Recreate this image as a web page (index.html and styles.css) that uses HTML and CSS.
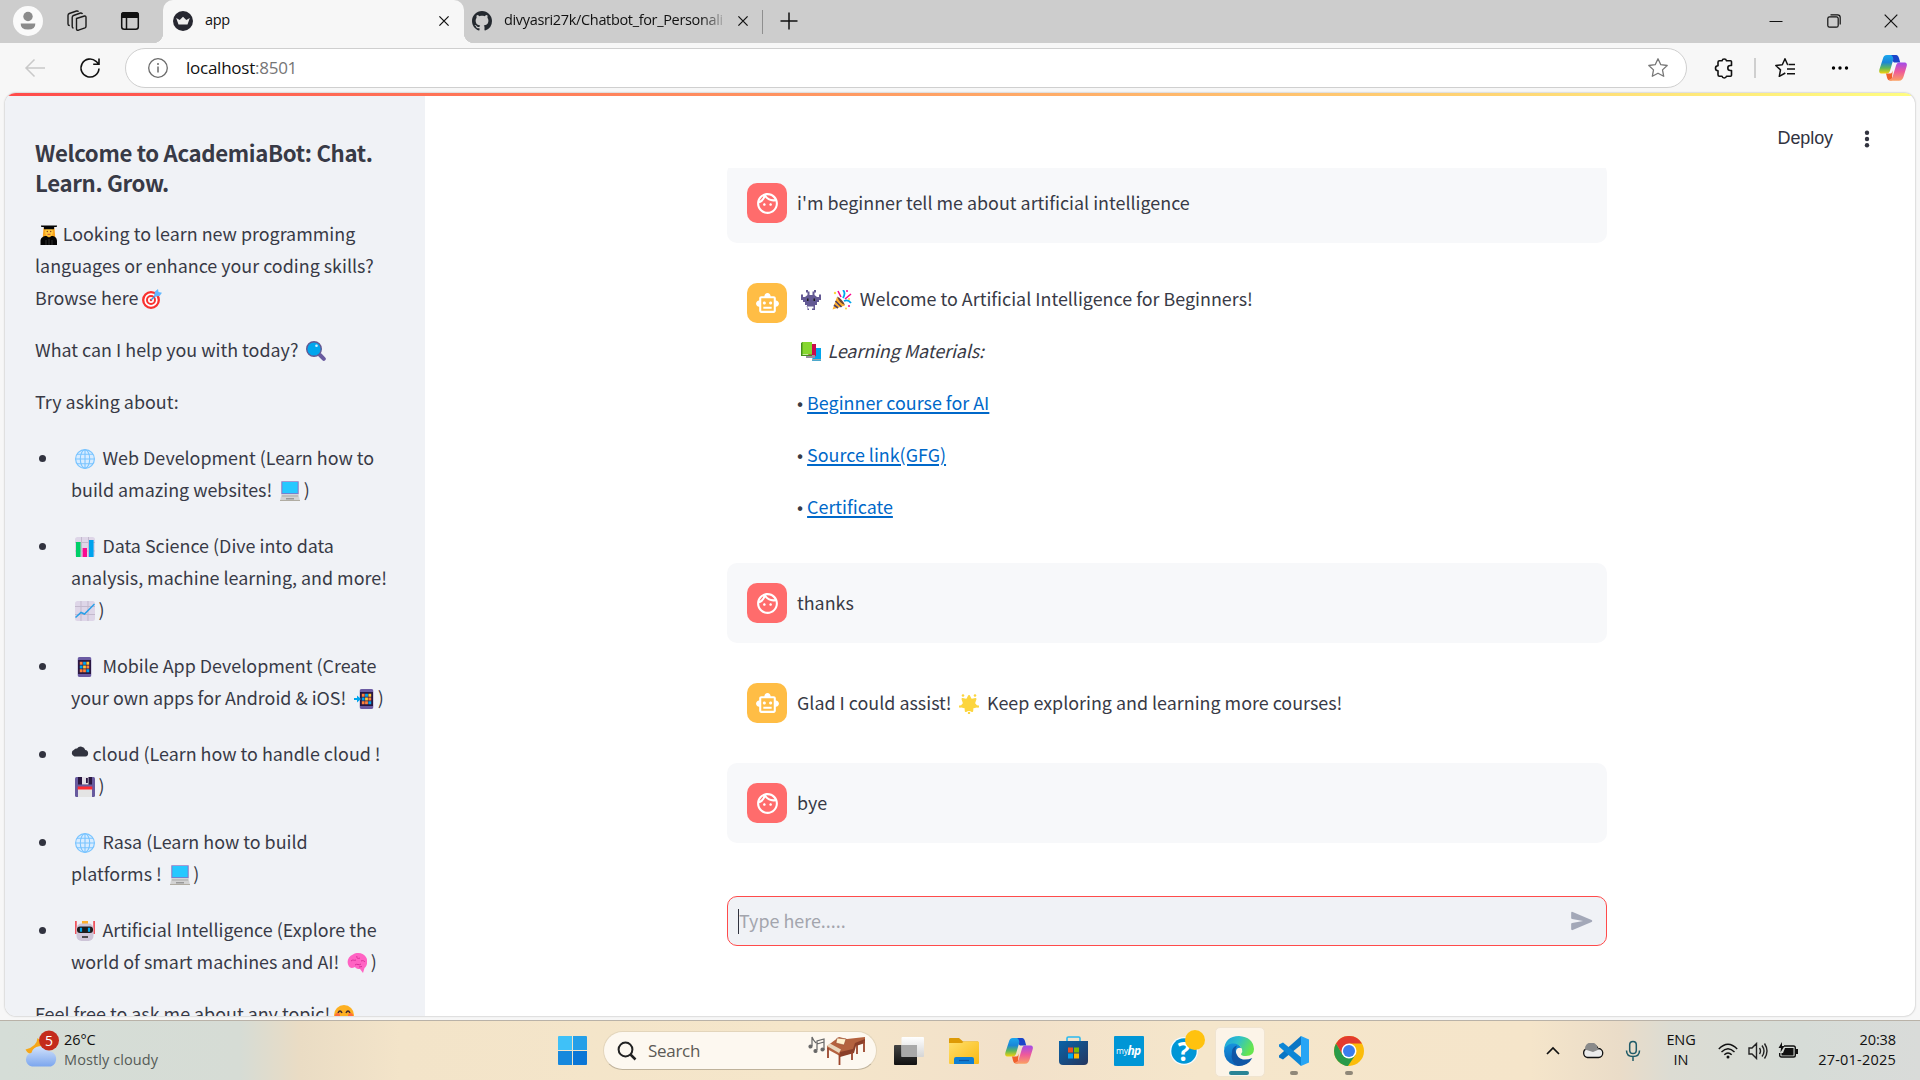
FILE: index.html
```html
<!DOCTYPE html>
<html lang="en">
<head>
<meta charset="utf-8">
<title>app</title>
<link rel="stylesheet" href="styles.css">
</head>
<body>
<svg class="sprite" aria-hidden="true">
  <defs>
    <linearGradient id="cpA" x1="0" y1="0" x2="0" y2="1"><stop offset="0" stop-color="#1aa7ee"/><stop offset=".4" stop-color="#1b86d8"/><stop offset=".7" stop-color="#5fb75b"/><stop offset="1" stop-color="#f5d20a"/></linearGradient>
    <linearGradient id="cpB" x1="0" y1="0" x2="0" y2="1"><stop offset="0" stop-color="#a24bea"/><stop offset=".5" stop-color="#ee5a9b"/><stop offset="1" stop-color="#fba063"/></linearGradient>
    <linearGradient id="edA" x1="0" y1="0" x2="1" y2=".4"><stop offset="0" stop-color="#1b9de2"/><stop offset=".5" stop-color="#2fc1c8"/><stop offset="1" stop-color="#66e54f"/></linearGradient>
    <linearGradient id="edB" x1="0" y1="0" x2="0" y2="1"><stop offset="0" stop-color="#1795df"/><stop offset="1" stop-color="#0c63b8"/></linearGradient>
    <linearGradient id="stG" x1="0" y1="0" x2="1" y2="1"><stop offset="0" stop-color="#0a63a8"/><stop offset="1" stop-color="#24365f"/></linearGradient>
    <linearGradient id="clG" x1="0" y1="0" x2="0" y2="1"><stop offset="0" stop-color="#d2e2fb"/><stop offset="1" stop-color="#7ba6ee"/></linearGradient>
    <linearGradient id="flG" x1="0" y1="0" x2="1" y2="1"><stop offset="0" stop-color="#ffdf6b"/><stop offset="1" stop-color="#f9b912"/></linearGradient>
    <linearGradient id="tvG" x1="0" y1="0" x2="0" y2="1"><stop offset="0" stop-color="#444"/><stop offset="1" stop-color="#111"/></linearGradient>
    <linearGradient id="tvW" x1="0" y1="0" x2="0" y2="1"><stop offset="0" stop-color="#fff"/><stop offset="1" stop-color="#d5d5d5"/></linearGradient>
  </defs>
  <symbol id="face" viewBox="0 0 24 24"><path fill="#fff" d="M10.25 13c0 .69-.56 1.25-1.25 1.25S7.75 13.69 7.75 13s.56-1.25 1.25-1.25 1.25.56 1.25 1.25zM15 11.75c-.69 0-1.25.56-1.25 1.25s.56 1.25 1.25 1.25 1.25-.56 1.25-1.25-.56-1.25-1.25-1.25zm7 .25c0 5.52-4.48 10-10 10S2 17.52 2 12 6.48 2 12 2s10 4.48 10 10zM10.66 4.12C12.06 6.44 14.6 8 17.5 8c.46 0 .91-.05 1.34-.12C17.44 5.56 14.9 4 12 4c-.46 0-.91.05-1.34.12zM4.42 9.47c1.71-.97 3.03-2.55 3.66-4.44C6.37 6 5.05 7.58 4.42 9.47zM20 12c0-.78-.12-1.53-.33-2.24-.7.15-1.42.24-2.17.24-3.13 0-5.92-1.44-7.76-3.69C8.69 8.87 6.6 10.88 4 11.86c.01.04 0 .09 0 .14 0 4.41 3.59 8 8 8s8-3.59 8-8z"/></symbol>
  <symbol id="bot" viewBox="0 0 24 24"><path fill="#fff" d="M20 9V7c0-1.1-.9-2-2-2h-3c0-1.66-1.34-3-3-3S9 3.34 9 5H6c-1.1 0-2 .9-2 2v2c-1.66 0-3 1.34-3 3s1.34 3 3 3v4c0 1.1.9 2 2 2h12c1.1 0 2-.9 2-2v-4c1.66 0 3-1.34 3-3s-1.34-3-3-3zm-2 10H6V7h12v12zm-9-6c-.83 0-1.5-.67-1.5-1.5S8.17 10 9 10s1.5.67 1.5 1.5S9.83 13 9 13zm7.5-1.5c0 .83-.67 1.5-1.5 1.5s-1.5-.67-1.5-1.5.67-1.5 1.5-1.5 1.5.67 1.5 1.5zM8 15h8v2H8v-2z"/></symbol>
  <symbol id="close" viewBox="0 0 24 24"><path d="M6.500 6.500l11 11M17.500 6.500l-11 11" stroke="#111" stroke-width="1.500" fill="none"/></symbol>
  <symbol id="copilot" viewBox="0 0 28 26"><path fill="url(#cpA)" d="M18.500 1.500C18 .5 17.300 0 16 0H8C5.500 0 4.500 1.500 3.800 4L.4 14.500C-.4 17.500.8 18.500 3 18.500h4.500c2 0 3-1 3.600-3L14 5.500C14.600 3.500 15.500 2 18.500 1.500z"/><path fill="#1b45c9" d="M14 5.500C14.800 2.500 13.500.8 12 0h4.800c2 0 2.700 1.500 3.300 3.500l1.100 4h-5c-1.500 0-2.500-.5-2.200-2z"/><path fill="#f0602b" d="M7 18.500h4.500c1.200 0 1.500-1 2.200-3l-1 10H11c-1.700 0-2.500-1-3-3z"/><path fill="url(#cpB)" d="M10 24.500c2.500-.3 3.500-2 4-4l3-10c.6-2 1.600-3 3.500-3H25c2.300 0 3.500 1 2.600 4l-3 10c-.8 2.700-1.900 4.200-4.600 4.200h-8c-1 0-1.700-.5-2-1.200z"/></symbol>
  <symbol id="e-globe" viewBox="0 0 20 20"><circle cx="10" cy="10" r="9.400" fill="#d8ecff" stroke="#79c4ff" stroke-width="1.200"/><path d="M10 .5v19M.5 10h19M2 5.200h16M2 14.800h16" stroke="#79c4ff" stroke-width="1.100" fill="none"/><ellipse cx="10" cy="10" rx="4.700" ry="9.300" fill="none" stroke="#79c4ff" stroke-width="1.100"/></symbol>
  <symbol id="e-laptop" viewBox="0 0 20 20"><rect x="1.300" y=".3" width="17.400" height="12.900" fill="#8874c4"/><rect x="2.300" y="1" width="15.400" height="11.200" fill="#27c8ff"/><path fill="#d3d3d3" d="M1.500 13.200h17L20 20H0z"/><path stroke="#a9a9a9" stroke-width="1" d="M2 15h16"/><path fill="#999" d="M6 17h8v1.500H6z"/><path fill="#b0aca2" d="M0 19h20v1H0z"/></symbol>
  <symbol id="e-bars" viewBox="0 0 20 20"><rect width="20" height="20" rx="2.500" fill="#ded6e8"/><path d="M6.500 0v20M13.500 0v20M0 5.500h20M0 14h20" stroke="#c3b9cd"/><path fill="#00cf68" d="M1 5h4.600v15H1z"/><path fill="#fa0a91" d="M7.600 11H12v9H7.600z"/><path fill="#00a3ee" d="M14 3h4.600v17H14z"/></symbol>
  <symbol id="e-chart" viewBox="0 0 20 20"><rect width="20" height="20" rx="2.500" fill="#ded6e8"/><path d="M6 0v20M13 0v20M0 5.500h20M0 13.500h20" stroke="#c3b9cd"/><path d="M.5 16.500l5.500-5 3.500 1.500 10-10" stroke="#2aa0e8" stroke-width="1.500" fill="none"/></symbol>
  <symbol id="phone-body" viewBox="0 0 14 20"><rect width="14" height="20" rx="2" fill="#6b5ba3"/><path fill="#2a1741" d="M.5 3h13v14H.5z"/><path fill="#ff823b" d="M2.300 4.700h2.800v3H2.300zM8.900 8.500h2.800v3H8.900zM5.600 12.300h2.800v3H5.600z"/><path fill="#00a6ed" d="M5.600 4.700h2.800v3H5.600zM2.300 8.500h2.800v3H2.300zM8.900 12.300h2.800v3H8.900z"/><path fill="#fcc93a" d="M8.900 4.700h2.800v3H8.900zM5.600 8.500h2.800v3H5.600z"/><path fill="#ff823b" d="M2.300 12.300h2.800v3H2.300z"/></symbol>
  <symbol id="e-phone" viewBox="0 0 20 20"><use href="#phone-body" x="2.500" width="14" height="20"/></symbol>
  <symbol id="e-phonein" viewBox="0 0 20 20"><use href="#phone-body" x="5.500" width="14" height="20"/><path fill="#00a6ed" d="M0 9h3V6.500L7 10l-4 3.500V11H0z"/></symbol>
  <symbol id="e-floppy" viewBox="0 0 20 20"><path fill="#675a9e" d="M0 1.500Q0 0 1.500 0h17Q20 0 20 1.500v17q0 1.500-1.500 1.500h-17Q0 20 0 18.500z"/><path fill="#2a1741" d="M3 0h14v7.500H3z"/><path fill="#e3e0e8" d="M7 0h6.500v7.500H7z"/><path fill="#2a1741" d="M11 1h1.800v5H11z"/><path fill="#ff2b30" d="M2.700 9.500h14.600V13H2.700z"/><path fill="#e4e4e4" d="M3 12.500h14V20H3z"/></symbol>
  <symbol id="e-robot" viewBox="0 0 20 20"><path stroke="#f0424c" stroke-width="1.600" d="M.9 0v13M19.100 0v13"/><path fill="#ffb02e" d="M7 0h6v4H7z"/><rect x="1.500" y="2.500" width="17" height="17.500" rx="5" fill="#cec5d8"/><rect x="2" y="5.500" width="16" height="6.500" rx="3" fill="#1c1c1c"/><path stroke="#00a6ed" stroke-width="2.200" d="M6 6.800v4M14 6.800v4"/><path stroke="#222" stroke-width="1.700" d="M7 16h6"/></symbol>
  <symbol id="e-brain" viewBox="0 0 20 20"><path fill="#ff63c3" d="M6 1.500C10-1 17-.5 19.500 5c1.500 4 .5 8-2 10l-1.500 5-3-4c-3 0-4-.5-5-2-3 1.500-5 1-6-.5C-1 9 1 3.500 6 1.500z"/><path fill="none" stroke="#d8309a" d="M4 8c2-2 3 0 5-1M10 3c-1 2 1 3 3 2M8 12c2-2 4 1 6-1M14 8c2-1 3 0 4 1M12 14l3-.5"/></symbol>
  <symbol id="e-smile" viewBox="0 0 20 20"><circle cx="10" cy="10" r="10" fill="#fdb022"/><path d="M4 8q2-4 4 0M12 8q2-4 4 0" stroke="#402a32" stroke-width="1.500" fill="none"/><circle cx="3.500" cy="10.500" r="2.500" fill="#ff6d3b"/><circle cx="16.500" cy="10.500" r="2.500" fill="#ff6d3b"/><path d="M6 12q4 4 8 0" stroke="#402a32" stroke-width="1.500" fill="none"/></symbol>
  <symbol id="e-grad" viewBox="0 0 20 20"><path fill="#f8a31c" d="M4.500 3h11l.8 10H3.700z"/><path fill="#050505" d="M1.500 20v-4c0-3 2.500-5 6-5l2.500 1.500L12.500 11c3.500 0 5.500 2 5.500 5v4z"/><ellipse cx="10" cy="7" rx="4" ry="4.700" fill="#ffc83d"/><circle cx="8.300" cy="6.500" r=".7" fill="#803a20"/><circle cx="11.700" cy="6.500" r=".7" fill="#803a20"/><path stroke="#c3323f" stroke-width=".8" d="M8.500 9.300h3"/><path fill="#050505" d="M2 .5h16v1.200l-3 .6v2H5v-2l-3-.6z"/><path stroke="#444" stroke-width=".7" d="M7 15v5M10 14v6M13 15v5"/></symbol>
  <symbol id="e-dart" viewBox="0 0 20 20"><circle cx="9" cy="11" r="7.800" fill="#fff" stroke="#f9312f" stroke-width="2.300"/><circle cx="9" cy="11" r="4" fill="none" stroke="#f9312f" stroke-width="2"/><circle cx="9" cy="11" r="1.300" fill="#f9312f"/><path stroke="#3796e0" stroke-width="1.300" d="M9 11l6-6"/><path fill="#62b8ff" d="M12 7.500l1-5L16 0l.5 3 3.500.7L17.500 7z"/></symbol>
  <symbol id="e-search" viewBox="0 0 20 20"><path stroke="#695b9f" stroke-width="4" stroke-linecap="round" d="M14 14l3.800 3.800"/><circle cx="8" cy="8" r="7.300" fill="#00a6ed" stroke="#635994" stroke-width="1.400"/><circle cx="10.500" cy="4.700" r="1.300" fill="#d3f3ff"/></symbol>
  <symbol id="e-cloud" viewBox="0 0 18 11"><path fill="#31333f" d="M3.500 10.500a3.500 3.500 0 01-.4-6.700A3 3 0 016 2.500 4.700 4.700 0 0114.300 4a3.300 3.300 0 01.2 6.500z"/></symbol>
  <symbol id="e-alien" viewBox="0 0 20 20"><path fill="#635994" d="M5 0h2v1.500h1.500V5h3V1.500H13V0h2v2.500h-1.500V5L16 7h2V4.500h2V10h-2v2h-2v3h-2v1.500H6V15H4v-3H2v-2H0V4.500h2V7h2l2.500-2V2.500H5z"/><path fill="#1c1c1c" d="M6 8.500h1.500V11H6zM12.500 8.500H14V11h-1.500z"/><path fill="#635994" d="M5 16.500h1.500V20H8v-1.500H6V16zM14 16h-1.500v2.500H11V20h3z"/></symbol>
  <symbol id="e-party" viewBox="0 0 20 20"><path fill="#ffb02e" d="M.5 19.500L5 7l8 8.500z"/><path stroke="#4f3d63" stroke-width="1.600" d="M3.500 11l6 6M2 15l4 3"/><path fill="#6d4534" d="M5 6.500q5 2 8 8.500-5-1-8-8.500z"/><path stroke="#00a6ed" stroke-width="1.800" fill="none" d="M11 0q3 3 0 8M12 11q4-2 7 2"/><path stroke="#f70a8d" stroke-width="1.600" fill="none" d="M6 1l3 6M19 4l-6 5M14 1h2"/><g fill="#fcd53f"><circle cx="3" cy="3" r="1.200"/><circle cx="17" cy="9" r="1"/><circle cx="14" cy="18.500" r="1"/></g><circle cx="17" cy="16" r="1" fill="#f70a8d"/></symbol>
  <symbol id="e-books" viewBox="0 0 20 20"><path fill="#00a6ed" d="M13 6h7v13h-9z"/><path fill="#9aa" d="M11 17h9v1.500h-9z"/><path fill="#ca0b4a" d="M8 2h7v12l-8 2z"/><path fill="#998ea4" d="M5 13h9v3H5z"/><path fill="#86d72f" d="M1 0h10v12.500H1z"/><path fill="#44911b" d="M0 1l1.500-1v13H11v1H0z"/></symbol>
  <symbol id="e-star" viewBox="0 0 20 20"><path fill="#fcd53f" stroke="#fcd53f" stroke-width="2" stroke-linejoin="round" d="M10 2l2 4 4.500-1-1.500 4.500 2.500 3-4 .9L13.200 17 10 15.300 6.800 17l-.3-3.600-4-.9 2.500-3L3.500 5 8 6z"/><g fill="#fcd53f"><circle cx="4" cy="1.500" r="1.300"/><circle cx="16" cy="1.500" r="1.300"/><circle cx="1" cy="12.500" r="1.200"/><circle cx="19" cy="12.500" r="1.200"/><circle cx="10" cy="19" r="1.200"/></g></symbol>
</svg>

<header class="titlebar">
  <div class="tools">
    <svg width="30" height="30" viewBox="0 0 30 30"><circle cx="15" cy="15" r="15" fill="#fafafa"/><circle cx="15" cy="10.500" r="4.700" fill="#8b8b8b"/><path fill="#8b8b8b" d="M7.700 17.500h14.600q.4 6-7.300 6t-7.300-6z"/></svg>
    <svg class="t-work" width="24" height="24" viewBox="0 0 24 24" fill="none" stroke="#1b1b1b" stroke-width="1.400" stroke-linejoin="round"><path d="M11.500 9.500l8-2.500q1.500-.3 1.500 1.300v9q0 1.200-1 1.600l-6.500 2.300q-2 .5-2-1.300z"/><path d="M8.500 19q-1.300 0-1.300-1.500V8.500q0-1.500 1.300-2l7-2.500q1.500-.3 2 1"/><path d="M4.800 16.500Q3 16.500 3 15V6.500Q3 5 4.300 4.500L11.500 2q1.500-.3 2 .8"/></svg>
    <svg class="t-side" width="24" height="24" viewBox="0 0 24 24"><rect x="3.700" y="3.700" width="16.600" height="16.600" rx="2.500" fill="none" stroke="#111" stroke-width="1.500"/><path d="M3 9V6q0-3 3-3h12q3 0 3 3v3z" fill="#111"/><path d="M8.500 9v11" stroke="#111" stroke-width="1.500"/></svg>
  </div>
  <div class="tab tab-active">
    <svg width="20" height="20" viewBox="0 0 20 20"><circle cx="10" cy="10" r="10" fill="#262730"/><path fill="#eee" d="M3.200 7l3.500 2L10 5.800 13.300 9l3.500-2-2.300 6.500h-9z"/></svg>
    <span class="tab-title">app</span>
    <svg width="20" height="20"><use href="#close"/></svg>
  </div>
  <div class="tab tab-idle">
    <svg width="20" height="20" viewBox="0 0 16 16"><path fill="#24292f" d="M8 0C3.580 0 0 3.580 0 8c0 3.540 2.290 6.530 5.470 7.590.4.070.55-.17.55-.38 0-.19-.01-.82-.01-1.490-2.010.37-2.530-.49-2.690-.94-.09-.23-.48-.94-.82-1.130-.28-.15-.68-.52-.01-.53.63-.01 1.080.58 1.230.82.72 1.210 1.870.87 2.330.66.070-.52.28-.87.51-1.070-1.780-.2-3.640-.89-3.640-3.950 0-.87.31-1.590.82-2.150-.08-.2-.36-1.020.08-2.120 0 0 .67-.21 2.200.82.64-.18 1.320-.27 2-.27s1.360.09 2 .27c1.530-1.040 2.200-.82 2.200-.82.44 1.100.16 1.920.08 2.120.51.56.82 1.270.82 2.150 0 3.070-1.870 3.750-3.650 3.950.29.25.54.73.54 1.480 0 1.070-.01 1.930-.01 2.200 0 .21.15.46.55.38A8.010 8.010 0 0016 8c0-4.420-3.580-8-8-8z"/></svg>
    <span class="tab-title faded">divyasri27k/Chatbot_for_Personali</span>
    <svg width="20" height="20"><use href="#close"/></svg>
  </div>
  <svg class="newtab" width="20" height="20" viewBox="0 0 20 20"><path d="M10 1.500v17M1.500 10h17" stroke="#111" stroke-width="1.500"/></svg>
  <div class="winbtns">
    <svg width="14" height="14" viewBox="0 0 14 14"><path d="M.5 7.500h13" stroke="#111"/></svg>
    <svg width="14" height="14" viewBox="0 0 14 14" fill="none" stroke="#111" stroke-width="1.200"><rect x=".8" y="2.800" width="10.400" height="10.400" rx="1.800"/><path d="M3.500.8h7q2.700 0 2.700 2.700v7"/></svg>
    <svg width="14" height="14" viewBox="0 0 14 14"><path d="M.7.700l12.600 12.600M13.300.7L.7 13.300" stroke="#111" stroke-width="1.200"/></svg>
  </div>
</header>

<div class="toolbar">
  <svg width="22" height="22" viewBox="0 0 22 22"><path d="M21 11H2M10.500 2.500L2 11l8.500 8.500" stroke="#c9c9c9" stroke-width="1.500" fill="none"/></svg>
  <svg class="reload" width="22" height="22" viewBox="0 0 22 22"><path d="M20 11.500A9 9 0 1117 4.300L19.500 6.800M20 1.500v5.800h-5.800" stroke="#111" stroke-width="1.600" fill="none"/></svg>
  <div class="address">
    <svg width="20" height="20" viewBox="0 0 20 20"><circle cx="10" cy="10" r="9.300" fill="none" stroke="#6b6b6b" stroke-width="1.300"/><path d="M10 8.500v6" stroke="#6b6b6b" stroke-width="1.500"/><circle cx="10" cy="6" r="1" fill="#6b6b6b"/></svg>
    <span class="url">localhost<i>:8501</i></span>
    <svg width="22" height="22" viewBox="0 0 22 22"><path d="M11 1.800l2.800 5.900 6.400.8-4.700 4.400 1.200 6.400L11 16.200l-5.700 3.100 1.200-6.400L1.800 8.500l6.400-.8z" stroke="#777" stroke-width="1.300" fill="none" stroke-linejoin="round"/></svg>
  </div>
  <svg class="ext" width="22" height="22" viewBox="0 0 22 22"><path d="M6.500 3.800H9a2.300 2.300 0 014.500 0h4q1 0 1 1v3.700h-1.200a2.500 2.500 0 000 5h1.200v4.700q0 1-1 1h-4a2.300 2.300 0 01-4.500 0H6.500q-1.500 0-1.500-1.500v-4a2.500 2.500 0 010-5v-3.400q0-1.500 1.500-1.500z" stroke="#111" stroke-width="1.600" fill="none" stroke-linejoin="round"/></svg>
  <span class="vr"></span>
  <svg class="fav" width="22" height="22" viewBox="0 0 22 22"><path d="M14 7.600L13.500 7.500 11 1.800 8.300 7.700l-6.500.8 4.700 4.400-1.200 6.400 6-3.300M14.500 7.500H21M13 12h8M13 16.700h8" stroke="#111" stroke-width="1.500" fill="none" stroke-linejoin="round"/></svg>
  <svg class="more" width="18" height="6" viewBox="0 0 18 6"><circle cx="2.500" cy="3" r="1.700"/><circle cx="9" cy="3" r="1.700"/><circle cx="15.500" cy="3" r="1.700"/></svg>
  <svg class="cp" width="28" height="26"><use href="#copilot"/></svg>
</div>

<div class="frame">
  <div class="page">
    <div class="decoration"></div>
    <aside class="sidebar">
      <h3>Welcome to AcademiaBot: Chat.<br>Learn. Grow.</h3>
      <p><svg class="emoji narrow"><use href="#e-grad"/></svg>Looking to learn new programming<br>languages or enhance your coding skills?<br>Browse here<svg class="emoji"><use href="#e-dart"/></svg></p>
      <p>What can I help you with today? <svg class="emoji"><use href="#e-search"/></svg></p>
      <p>Try asking about:</p>
      <ul>
        <li><svg class="emoji"><use href="#e-globe"/></svg> Web Development (Learn how to<br>build amazing websites! <svg class="emoji"><use href="#e-laptop"/></svg>)</li>
        <li><svg class="emoji"><use href="#e-bars"/></svg> Data Science (Dive into data<br>analysis, machine learning, and more!<br><svg class="emoji"><use href="#e-chart"/></svg>)</li>
        <li><svg class="emoji"><use href="#e-phone"/></svg> Mobile App Development (Create<br>your own apps for Android &amp; iOS! <svg class="emoji"><use href="#e-phonein"/></svg>)</li>
        <li><svg class="cloud"><use href="#e-cloud"/></svg>cloud (Learn how to handle cloud !<br><svg class="emoji"><use href="#e-floppy"/></svg>)</li>
        <li><svg class="emoji"><use href="#e-globe"/></svg> Rasa (Learn how to build<br>platforms ! <svg class="emoji"><use href="#e-laptop"/></svg>)</li>
        <li><svg class="emoji"><use href="#e-robot"/></svg> Artificial Intelligence (Explore the<br>world of smart machines and AI! <svg class="emoji"><use href="#e-brain"/></svg>)</li>
      </ul>
      <p>Feel free to ask me about any topic!<svg class="emoji"><use href="#e-smile"/></svg></p>
    </aside>
    <main class="main">
      <div class="apphead">
        <span class="deploy">Deploy</span>
        <svg width="6" height="18" viewBox="0 0 6 18" fill="#31333f"><circle cx="3" cy="2.700" r="2.200"/><circle cx="3" cy="9" r="2.200"/><circle cx="3" cy="15.300" r="2.200"/></svg>
      </div>
      <div class="chat">
        <div class="thread">
          <div class="msg user"><span class="avatar"><svg><use href="#face"/></svg></span><div class="body single">i'm beginner tell me about artificial intelligence</div></div>
          <div class="msg"><span class="avatar"><svg><use href="#bot"/></svg></span><div class="body">
            <p><svg class="emoji"><use href="#e-alien"/></svg> <svg class="emoji"><use href="#e-party"/></svg> Welcome to Artificial Intelligence for Beginners!</p>
            <p><svg class="emoji"><use href="#e-books"/></svg> <em>Learning Materials:</em></p>
            <p>• <a>Beginner course for AI</a></p>
            <p>• <a>Source link(GFG)</a></p>
            <p>• <a>Certificate</a></p>
          </div></div>
          <div class="msg user"><span class="avatar"><svg><use href="#face"/></svg></span><div class="body single">thanks</div></div>
          <div class="msg"><span class="avatar"><svg><use href="#bot"/></svg></span><div class="body single">Glad I could assist! <svg class="emoji"><use href="#e-star"/></svg> Keep exploring and learning more courses!</div></div>
          <div class="msg user"><span class="avatar"><svg><use href="#face"/></svg></span><div class="body single">bye</div></div>
        </div>
      </div>
      <div class="inputbox">
        <span class="caret"></span><span class="placeholder">Type here.....</span>
        <svg width="26" height="26" viewBox="0 0 24 24"><path fill="#a3a8b8" d="M3.400 20.400l17.450-7.480a1 1 0 000-1.840L3.400 3.600a.993.993 0 00-1.390.91L2 9.120c0 .5.37.93.87.99L13 12 2.870 13.880c-.5.070-.87.5-.87 1l.01 4.610c0 .71.73 1.200 1.390.91z"/></svg>
      </div>
    </main>
  </div>
</div>

<footer class="taskbar">
  <div class="weather">
    <svg width="36" height="42" viewBox="0 0 36 42"><path fill="#f6a719" d="M12.500 8q-.5 8.500-12 11.500 3 6 10 4.500 7-2 6-9.500-.5-4-4-6.500z"/><path fill="url(#clG)" d="M7 36.500a7 7 0 01-.5-13.800A9 9 0 0123 21a8 8 0 013 15.500z"/><circle cx="24" cy="10.500" r="10" fill="#c42b1c"/><text x="24" y="15.500" text-anchor="middle" class="badge">5</text></svg>
    <div class="wtext"><span>26°C</span><span class="dim">Mostly cloudy</span></div>
  </div>
  <div class="apps">
    <span class="slot"><svg width="29" height="29" viewBox="0 0 29 29"><path fill="#3fc1f8" d="M1 0h13v14H0V1q0-1 1-1z"/><path fill="#259fe8" d="M15 0h13q1 0 1 1v13H15z"/><path fill="#1688dd" d="M0 15h14v14H1q-1 0-1-1z"/><path fill="#0a76d6" d="M15 15h14v13q0 1-1 1H15z"/></svg></span>
    <div class="search">
      <svg width="20" height="20" viewBox="0 0 20 20"><circle cx="8.500" cy="8.500" r="6.900" fill="none" stroke="#222" stroke-width="2"/><path d="M13.500 13.500l5 5" stroke="#222" stroke-width="2.500"/></svg>
      <span class="stext">Search</span>
      <svg width="60" height="30" viewBox="0 0 60 30"><g stroke="#666" stroke-width="1.200" fill="#666"><path fill="none" d="M5 10V1q1 3 4 6M10 14V5l7-2v11M10 8l7-2"/><circle cx="3.500" cy="10.500" r="1.500"/><circle cx="8.500" cy="15" r="1.500"/><circle cx="15.500" cy="13.500" r="1.500"/></g><path fill="#b4623f" d="M20 10l12-9 8 2 18-2v5l-10 3-2 8-13 3-13-7z"/><path fill="#8a3f29" d="M33 16l13-3 2-6 10-4v4l-9 3-2 7-14 4z"/><path fill="#e9d7bd" d="M20 10l3-2.500 11 6-2 3.500z"/><path fill="#fff0cd" stroke="#8a3f29" stroke-width=".5" d="M30 2l9 1-2 6-8-2z"/><path stroke="#9b452c" stroke-width="1.800" d="M21 12v10M32.500 18v11M45 16v8M50 9v9M57 5v11"/></svg>
    </div>
    <span class="slot first"><svg width="30" height="28" viewBox="0 0 30 28"><rect y="8" width="23" height="20" rx="1" fill="url(#tvG)"/><rect x="7.500" width="22.500" height="20" rx="1" fill="url(#tvW)"/><path fill="#a9a9a9" d="M7.500 8H23v12H7.500z"/></svg></span>
    <span class="slot"><svg width="30" height="26" viewBox="0 0 30 26"><path fill="#dd9a05" d="M0 1q0-1 1-1h9l4 3.500h15V9H0z"/><path fill="url(#flG)" d="M0 5h13l2-1.500h14q1 0 1 1V25q0 1-1 1H1q-1 0-1-1z"/><path fill="#0f7fd4" d="M5 26v-5q0-2 2-2h16q2 0 2 2v5z"/><path stroke="#0b56a5" stroke-width="1.200" d="M10 22.500h10"/></svg></span>
    <span class="slot"><svg width="28" height="26"><use href="#copilot"/></svg></span>
    <span class="slot"><svg width="29" height="30" viewBox="0 0 29 30"><path d="M8 6V2.300q0-1.300 1.300-1.300h10.400Q21 1 21 2.300V6" stroke="#2bb9ef" stroke-width="1.600" fill="none"/><path fill="url(#stG)" d="M0 5h29v20q0 4-4 4H4q-4 0-4-4z"/><path fill="#f25022" d="M9 11.500h5v5H9z"/><path fill="#7fba00" d="M15 11.500h5v5h-5z"/><path fill="#00a4ef" d="M9 17.500h5v5H9z"/><path fill="#ffb900" d="M15 17.500h5v5h-5z"/></svg></span>
    <span class="slot"><svg width="30" height="30" viewBox="0 0 30 30"><rect width="30" height="30" rx="1" fill="#0096d6"/><text x="2" y="18" class="my">my</text><text x="13.500" y="19" class="hp">hp</text></svg></span>
    <span class="slot"><svg class="help" width="36" height="36" viewBox="0 0 36 36"><circle cx="14" cy="22" r="14" fill="#f6fbff"/><circle cx="14" cy="22" r="12.700" fill="#0096d6"/><text x="14" y="31.500" text-anchor="middle" class="q">?</text><circle cx="25" cy="11" r="10" fill="#ffc20e"/></svg></span>
    <span class="slot active"><svg width="30" height="30" viewBox="0 0 30 30"><path fill="url(#edB)" d="M0 15C1 7 8 4 14 8l4 4q-6-1-6 4 0 8 8 10l3 1q-5 4-12 2.500Q0 26 0 15z"/><path fill="#1056a5" d="M8 16q0-5 5-6.500-2 3-1.500 6Q13 22 19 23.500q5 .5 9.300-1.500Q24 30 14 30 6 26 8 16z"/><path fill="url(#edA)" d="M0 14Q1 0 15 0q14 1 15 13 0 7-8 7-5 0-5-2 2-2 1-5-3-6-10-5.500Q2 8.500 0 14z"/></svg><i class="ind wide"></i></span>
    <span class="slot"><svg width="30" height="30" viewBox="0 0 30 30"><path fill="#0a76c4" d="M22 0l1 8L4 23.500 0 21.500v-2z"/><path fill="#0d86d6" d="M22 30l1-8L4 6.500 0 8.500v2z"/><path fill="#27a5f5" d="M22 0l8 3.500v23L22 30z"/></svg><i class="ind"></i></span>
    <span class="slot"><svg width="30" height="30" viewBox="0 0 30 30"><circle cx="15" cy="15" r="15" fill="#fbbc0a"/><path fill="#e33b2e" d="M2 7.500A15 15 0 0128 7.500H15L8.500 18.700z"/><path fill="#2a9a49" d="M2 7.500l6.500 11.200L15 22.500l-1.200 7.400A15 15 0 012 7.500z"/><path fill="#2a9a49" d="M21.500 18.700L14 30Q12 29.800 10 29l5-8z"/><circle cx="15" cy="15" r="7.500" fill="#fff"/><circle cx="15" cy="15" r="6" fill="#3b7ded"/></svg><i class="ind"></i></span>
  </div>
  <div class="tray">
    <span class="tslot"><svg width="14" height="9" viewBox="0 0 14 9"><path d="M1 8l6-6 6 6" fill="none" stroke="#111" stroke-width="1.700"/></svg></span>
    <span class="tslot"><svg width="22" height="16" viewBox="0 0 22 16"><path fill="#ececec" stroke="#111" stroke-width="1.300" d="M5.500 14.500a4.500 4.500 0 01-.5-8.800A6 6 0 0116 5.500a4.500 4.500 0 01.5 9z"/><path fill="#8a8a8a" d="M3 6.500A6 6 0 0115.500 5l2 1.200L11 9z"/></svg></span>
    <span class="tslot"><svg width="16" height="22" viewBox="0 0 16 22" fill="none" stroke="#205b68" stroke-width="1.500"><rect x="4.700" y="1.500" width="6.600" height="12" rx="3.300"/><path d="M1.500 10.500q0 6 6.500 6t6.500-6M8 16.500V21"/></svg></span>
    <div class="lang"><span>ENG</span><span>IN</span></div>
    <span class="islot"><svg width="20" height="16" viewBox="0 0 20 16" fill="none" stroke="#111" stroke-width="1.400"><path d="M.8 6q9.200-9.500 18.400 0M3.500 9q6.500-6.500 13 0M6.300 11.800q3.700-3.700 7.400 0"/><circle cx="10" cy="14" r="1.500" fill="#111" stroke="none"/></svg></span>
    <span class="islot"><svg width="20" height="18" viewBox="0 0 20 18" fill="none" stroke="#222" stroke-width="1.400"><path d="M1 6h3l4.500-4.500v15L4 12H1zM11.500 6q2 3 0 6M14 3.500q4 5.500 0 11M16.500 1.500q5 7.500 0 15"/></svg></span>
    <span class="islot"><svg width="20" height="17" viewBox="0 0 20 17"><path d="M6 4h9.500q1.800 0 1.800 1.800v7.400q0 1.800-1.800 1.800h-12q-1.800 0-1.800-1.800V11" fill="none" stroke="#111" stroke-width="1.400"/><path d="M18 7h2v5h-2zM7 6h8.500v7.500h-12V11H5z" fill="#111"/><path d="M4 0L.5 6H3l-.5 4.500L6.500 4H4z" fill="#111"/></svg></span>
    <div class="clock"><span>20:38</span><span class="date">27-01-2025</span></div>
  </div>
</footer>
</body>
</html>
```
FILE: styles.css
```css
* { box-sizing: border-box; }
body {
  margin: 0;
  width: 1920px;
  height: 1080px;
  overflow: hidden;
  display: flex;
  flex-direction: column;
  background: #f7f7f7;
  font-family: "Open Sans", "Noto Sans", sans-serif;
  color: #111;
}
svg { display: block; flex: none; }
.sprite { position: absolute; width: 0; height: 0; }

/* Browser tab strip */
.titlebar { height: 43px; flex: none; background: #cdcdcd; display: flex; align-items: center; padding-bottom: 1px; }
.tools { width: 163px; flex: none; display: flex; align-items: center; padding-left: 13px; }
.t-work { margin-left: 22px; }
.t-side { margin-left: 29px; }
.tab { display: flex; align-items: center; height: 43px; margin-bottom: -1px; padding-bottom: 1px; font-size: 14.500px; letter-spacing: -0.300px; }
.tab-active { position: relative; width: 301px; flex: none; background: #f7f7f7; border-radius: 10px 10px 0 0; padding: 0 10px 1px 10px; }
.tab-active::before, .tab-active::after { content: ""; position: absolute; bottom: 0; width: 10px; height: 10px; }
.tab-active::before { left: -10px; background: radial-gradient(circle at 0 0, transparent 10px, #f7f7f7 10.500px); }
.tab-active::after { right: -10px; background: radial-gradient(circle at 100% 0, transparent 10px, #f7f7f7 10.500px); }
.tab-title { flex: 1; margin-left: 12px; white-space: nowrap; overflow: hidden; line-height: 22px; padding-bottom: 2px; }
.tab-idle { width: 299px; flex: none; padding-left: 8px; padding-right: 10px; position: relative; }
.tab-idle::after { content: ""; position: absolute; right: 0; top: 10px; width: 1px; height: 24px; background: #8f8f8f; }
.faded { margin-right: 5px; letter-spacing: -0.340px; -webkit-mask-image: linear-gradient(90deg, #000 88%, transparent); mask-image: linear-gradient(90deg, #000 88%, transparent); }
.newtab { margin-left: 16px; }
.winbtns { margin-left: auto; display: flex; gap: 43.500px; padding-right: 22px; }

/* Address row */
.toolbar { height: 50px; flex: none; display: flex; align-items: center; padding-left: 24px; }
.reload { margin-left: 33px; }
.address { width: 1562px; height: 40px; margin-left: 24px; flex: none; background: #fff; border: 1px solid #cfcfcf; border-radius: 20px; display: flex; align-items: center; padding: 0 17px 0 22px; }
.url { flex: 1; margin-left: 18px; font-size: 17px; letter-spacing: -0.250px; line-height: 24px; }
.url i { font-style: normal; color: #767676; }
.ext { margin-left: 26px; }
.vr { width: 2px; height: 20px; background: #cfcfcf; margin-left: 19px; }
.fav { margin-left: 18px; }
.more { margin-left: 35px; }
.cp { margin-left: 30px; }

/* Web page surface */
.frame { height: 927px; flex: none; padding: 0 5px 4px; }
.page { position: relative; height: 923px; display: flex; background: #fff; border-radius: 11px; overflow: hidden; box-shadow: 0 0 2px rgba(0,0,0,.35); font-family: "Noto Sans CJK JP", "Noto Sans CJK SC", sans-serif; }
.decoration { position: absolute; left: 0; right: 0; top: 0; height: 3px; background: linear-gradient(90deg, #ff4b4b, #fffd80); }
.sidebar { width: 420px; flex: none; background: #f0f2f6; padding: 44px 0 0 30px; font-size: 17.900px; line-height: 32px; color: #383a46; white-space: nowrap; }
.sidebar h3 { margin: 0 0 20px; font-size: 22.200px; line-height: 30px; font-weight: 700; letter-spacing: -0.340px; }
p { margin: 0; }
.sidebar p { margin-bottom: 20px; }
.sidebar ul { list-style: none; margin: 24px 0 20px; padding: 0; display: flex; flex-direction: column; gap: 24px; }
.sidebar li { position: relative; padding-left: 36px; }
.sidebar li::before { content: ""; position: absolute; left: 4px; top: 14px; width: 7px; height: 7px; border-radius: 50%; background: #31333f; }
.emoji { display: inline-block; width: 20px; height: 20px; margin: 0 3.700px; vertical-align: -3.500px; }
.narrow { margin-right: 4px; }
.cloud { display: inline-block; width: 18px; height: 11px; margin-right: 3.500px; vertical-align: 4px; }

.main { flex: 1; display: flex; flex-direction: column; align-items: center; color: #383a46; }
.apphead { width: 100%; height: 75px; flex: none; display: flex; align-items: center; justify-content: flex-end; padding: 16px 45px 0 0; font-family: "Liberation Sans", sans-serif; color: #31333f; }
.deploy { font-size: 18px; margin-right: 31px; letter-spacing: -0.100px; }
.chat { width: 880px; margin-right: 6px; height: 675px; flex: none; overflow: hidden; }
.thread { margin-top: -5px; display: flex; flex-direction: column; gap: 20px; font-size: 17.900px; line-height: 32px; }
.msg { display: flex; gap: 10px; padding: 20px; border-radius: 10px; }
.user { background: #f7f8fa; }
.avatar { width: 40px; height: 40px; flex: none; border-radius: 10px; background: #ffbd45; display: flex; align-items: center; justify-content: center; }
.user .avatar { background: #ff6c6c; }
.avatar svg { width: 25px; height: 25px; }
.body { display: flex; flex-direction: column; gap: 20px; white-space: nowrap; margin: -1px 0 1px; }
.single { display: block; padding-top: 4px; height: 40px; }
.body em { letter-spacing: -0.080px; margin-left: -1px; }
.body a { color: #0068c9; text-decoration: underline; text-underline-offset: 2px; text-decoration-thickness: 2px; }
.inputbox { width: 880px; height: 50px; margin: 53px 6px 0 0; flex: none; background: #f0f2f6; border: 1px solid #ff4b4b; border-radius: 10px; display: flex; align-items: center; padding: 0 11px 0 10px; font-size: 17.900px; line-height: 32px; }
.caret { width: 1px; height: 25px; background: #31333f; }
.placeholder { flex: 1; color: #a3a5ad; padding-bottom: 2px; }

/* Windows taskbar */
.taskbar { height: 60px; flex: none; display: flex; align-items: center; border-top: 1px solid #b9b2a8; background: linear-gradient(90deg, #d5ddd7 0, #d6dcd5 240px, #eadcc4 300px, #f3e4c9 400px, #f5e6ca 800px, #f2e1ca 1010px, #f5e6cb 1200px, #f5e5ca 1530px, #eadcc8 1620px, #dcdcd3 1670px, #d6dcd7 1800px, #d9dbd9 100%); font-size: 14.500px; letter-spacing: -0.100px; }
.weather { width: 545px; flex: none; display: flex; align-items: center; padding-left: 25px; }
.wtext, .lang, .clock { display: flex; flex-direction: column; line-height: 20px; padding-bottom: 2px; }
.wtext { margin-left: 3px; }
.dim { color: #555b57; letter-spacing: 0.100px; }
.date { letter-spacing: 0.220px; }
.badge { font: 14px "Open Sans", sans-serif; fill: #fff; }
.apps { display: flex; align-items: center; }
.slot { position: relative; width: 55px; height: 48px; display: flex; align-items: center; justify-content: center; }
.first { margin-left: 4px; }
.search { width: 274px; height: 39px; margin-left: 3px; border-radius: 20px; background: #fdf8f0; border: 1px solid #e3d5bb; border-bottom-color: #bfb29b; display: flex; align-items: center; padding: 0 9px 0 13px; }
.stext { flex: 1; margin-left: 11px; font-size: 17px; letter-spacing: -0.300px; color: #5c5a55; }
.my { font: 8.500px "Open Sans", sans-serif; fill: #fff; }
.hp { font: italic 700 12px "Open Sans", sans-serif; fill: #fff; letter-spacing: -0.800px; }
.q { font: 700 26px "Open Sans", sans-serif; fill: #fff; }
.help { margin: -8px 0 0 8px; }
.active::before { content: ""; position: absolute; left: 3.500px; top: 0; width: 48px; height: 48px; border-radius: 5px; background: #fcf4e8; border: 1px solid #f0e4d0; }
.active svg { position: relative; }
.ind { position: absolute; bottom: 0; left: 23.500px; width: 8px; height: 4px; border-radius: 2px; background: #8f8778; }
.wide { left: 17.500px; width: 20px; background: #2a8495; }
.tray { margin-left: auto; display: flex; align-items: center; padding-right: 24px; }
.tslot { width: 40px; display: flex; justify-content: center; }
.islot { width: 30px; display: flex; justify-content: center; }
.lang { width: 56px; margin-right: 4px; align-items: center; }
.clock { width: 93px; align-items: flex-end; }
```
